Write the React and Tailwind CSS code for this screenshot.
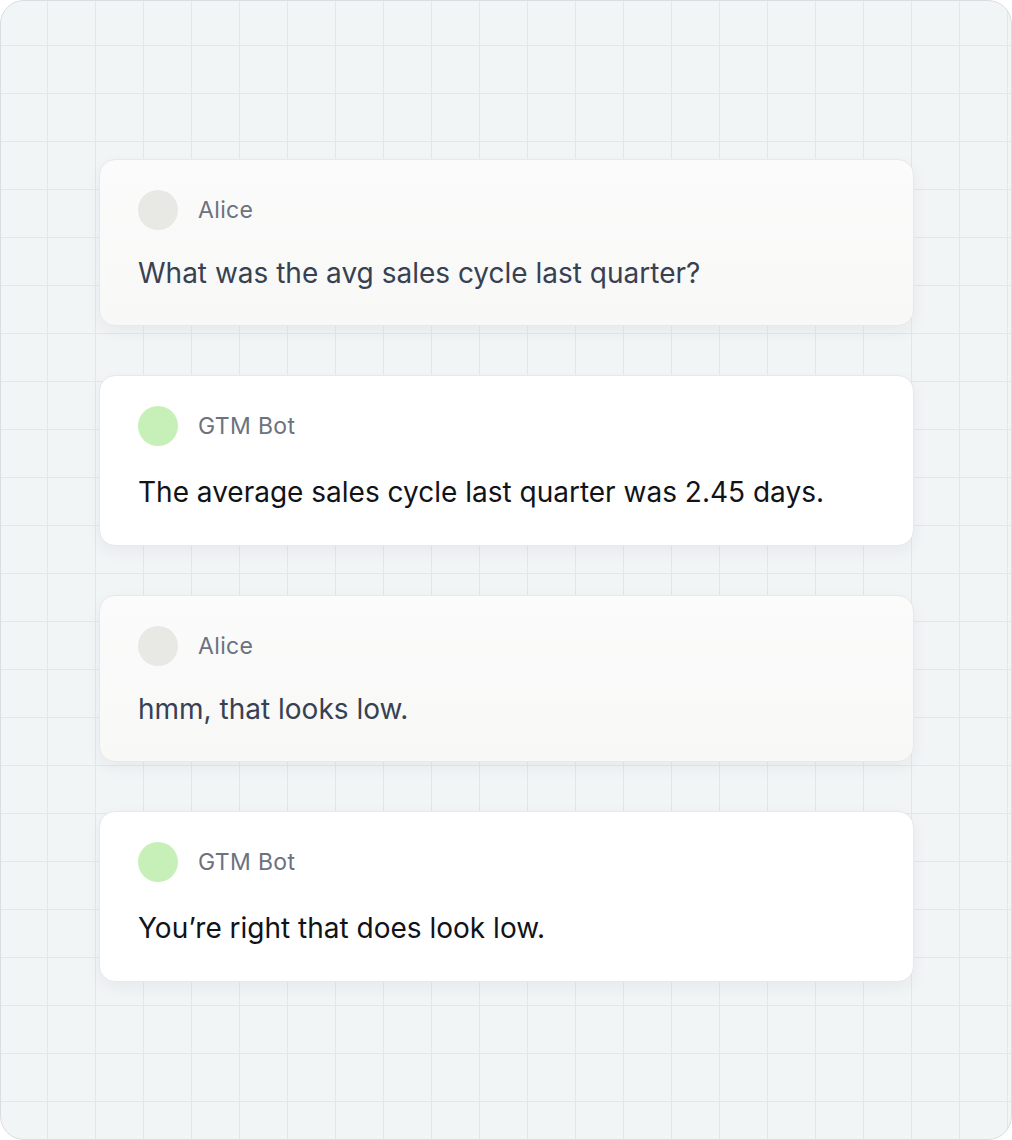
const messages = [
  { author: 'Alice', text: 'What was the avg sales cycle last quarter?', bot: false },
  { author: 'GTM Bot', text: 'The average sales cycle last quarter was 2.45 days.', bot: true },
  { author: 'Alice', text: 'hmm, that looks low.', bot: false },
  { author: 'GTM Bot', text: 'You\u2019re right that does look low.', bot: true },
]

function Message({ author, text, bot }) {
  return (
    <div
      className={
        bot
          ? 'rounded-[16px] border border-[#e6e8ea] bg-white px-[38px] pt-[30px] pb-[35px] shadow-[0_6px_16px_rgba(30,40,50,0.05)]'
          : 'rounded-[16px] border border-[#e6e8ea] bg-gradient-to-b from-[#fbfbfb] to-[#f8f8f7] px-[38px] pt-[30px] pb-[34px] shadow-[0_6px_16px_rgba(30,40,50,0.05)]'
      }
    >
      <div className="flex items-center gap-[20px]">
        <div className={bot ? 'h-10 w-10 rounded-full bg-[#c7f0b9]' : 'h-10 w-10 rounded-full bg-[#e8e8e5]'} />
        <span className="text-[23px] leading-none tracking-[0.015em] text-[#6b7280]">{author}</span>
      </div>
      <p
        className={
          bot
            ? 'mt-[28px] text-[28px] leading-[36px] text-[#111318]'
            : 'mt-[25px] text-[28px] leading-[36px] text-[#374152]'
        }
      >
        {text}
      </p>
    </div>
  )
}

export default function App() {
  return (
    <div className="font-['Inter',sans-serif] bg-white">
      <div className="h-[1140px] w-[1012px] rounded-[24px] border border-[#d6dee2] bg-[#f1f5f6] bg-[linear-gradient(to_right,#e2e8ea_1px,transparent_1px),linear-gradient(to_bottom,#e2e8ea_1px,transparent_1px)] bg-[size:48px_48px] bg-[position:46px_44px] pt-[158px]">
        <div className="ml-[98px] flex w-[815px] flex-col gap-[49px]">
          {messages.map((m, i) => (
            <Message key={i} {...m} />
          ))}
        </div>
      </div>
    </div>
  )
}
